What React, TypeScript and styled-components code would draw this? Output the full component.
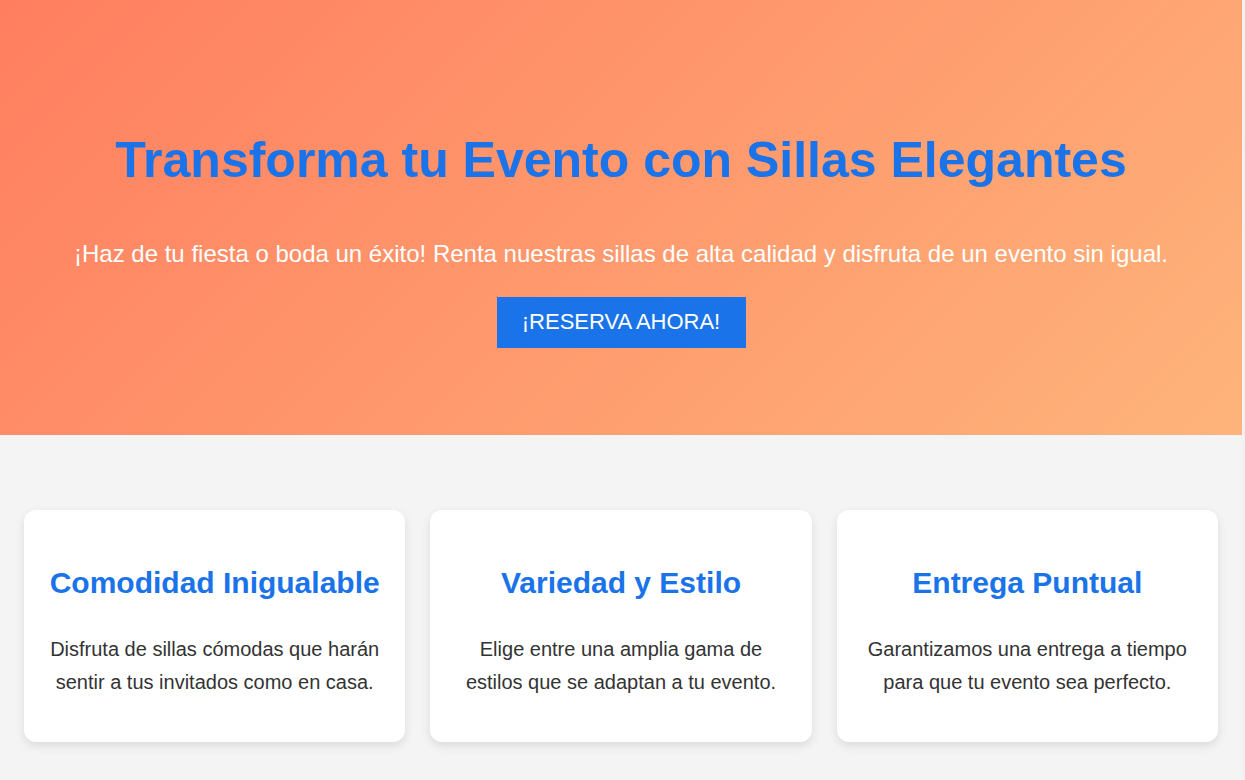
import styled, { createGlobalStyle } from "styled-components";

const features = [
  {
    title: "Comodidad Inigualable",
    text: "Disfruta de sillas cómodas que harán sentir a tus invitados como en casa.",
  },
  {
    title: "Variedad y Estilo",
    text: "Elige entre una amplia gama de estilos que se adaptan a tu evento.",
  },
  {
    title: "Entrega Puntual",
    text: "Garantizamos una entrega a tiempo para que tu evento sea perfecto.",
  },
];

const App = () => {
  return (
    <>
      <GlobalStyle />
      <Hero>
        <Title>Transforma tu Evento con Sillas Elegantes</Title>
        <Subtitle>
          ¡Haz de tu fiesta o boda un éxito! Renta nuestras sillas de alta calidad y disfruta de un
          evento sin igual.
        </Subtitle>
        <CtaButton>¡RESERVA AHORA!</CtaButton>
      </Hero>
      <Features>
        {features.map((f) => (
          <Card key={f.title}>
            <CardTitle>{f.title}</CardTitle>
            <CardText>{f.text}</CardText>
          </Card>
        ))}
      </Features>
    </>
  );
};

const GlobalStyle = createGlobalStyle`
  html {
    background: #f1f1f1;
  }
  body {
    margin: 0 3px 0 0;
    font-family: "Liberation Sans", Arial, sans-serif;
    background: #f4f4f4;
    color: #333;
  }
`;
const Hero = styled.header`
  background: linear-gradient(135deg, #ff7e5f, #feb47b);
  height: 435px;
  box-sizing: border-box;
  padding: 130px 20px 0;
  text-align: center;
`;
const Title = styled.h1`
  margin: 0;
  font-size: 50px;
  line-height: 1.2;
  color: #1a73e8;
`;
const Subtitle = styled.p`
  margin: 50px 0 0;
  font-size: 24px;
  line-height: 1.2;
  color: #fff;
`;
const CtaButton = styled.button`
  margin-top: 28px;
  width: 249px;
  height: 51px;
  border: none;
  background: #1a73e8;
  color: #fff;
  font-family: inherit;
  font-size: 22px;
  cursor: pointer;
`;
const Features = styled.section`
  display: flex;
  gap: 25px;
  padding: 75px 24px 38px;
`;
const Card = styled.div`
  flex: 1;
  background: #fff;
  border-radius: 12px;
  box-shadow: 0 4px 10px rgba(0, 0, 0, 0.1);
  padding: 30px 20px;
  text-align: center;
`;
const CardTitle = styled.h2`
  margin: 26px 0 25px;
  font-size: 30px;
  line-height: 34px;
  color: #1a73e8;
`;
const CardText = styled.p`
  margin: 33px 0 13px;
  font-size: 20px;
  line-height: 33px;
  color: #333;
`;

export default App;
